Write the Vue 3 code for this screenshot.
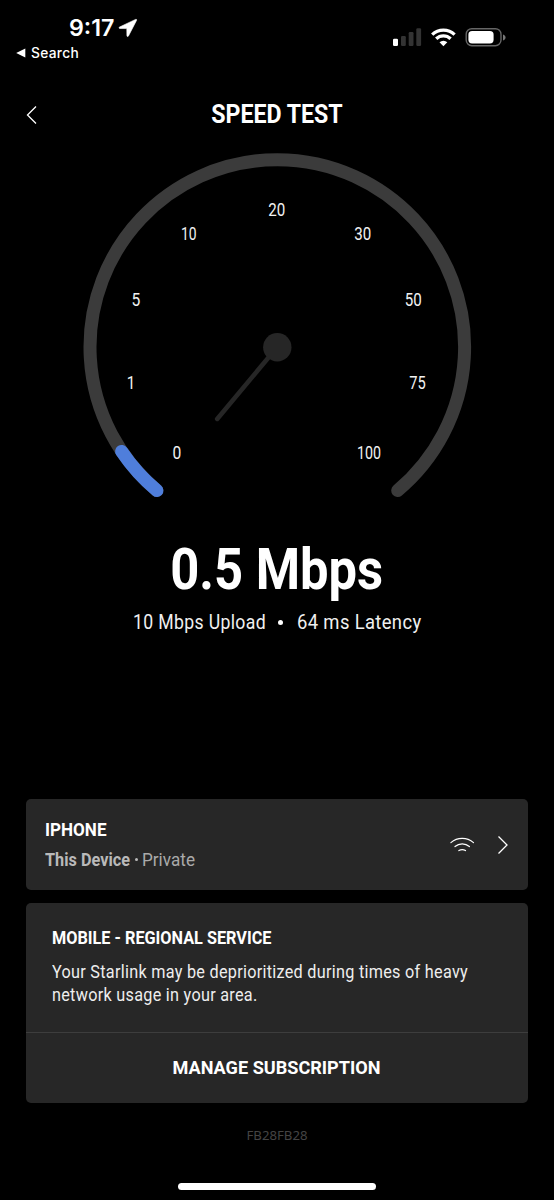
<script setup>
const ticks = [
  { label: '0', x: 177, y: 459, w: 8.8 },
  { label: '1', x: 131, y: 389, w: 8.5 },
  { label: '5', x: 136, y: 306.4, w: 8.8 },
  { label: '10', x: 188.7, y: 240.4, w: 15.6 },
  { label: '20', x: 276.7, y: 215.5, w: 17 },
  { label: '30', x: 362.8, y: 240.4, w: 17 },
  { label: '50', x: 413.2, y: 306.4, w: 17 },
  { label: '75', x: 417.5, y: 389, w: 16.5 },
  { label: '100', x: 368.9, y: 459, w: 24 },
]

// Condenses or widens a single line of text to the given width in pixels.
const vFit = {
  mounted(el, { value }) {
    el.style.transform = `scaleX(${value / el.getBoundingClientRect().width})`
  },
}
</script>

<template>
  <main class="screen">
    <header class="status">
      <div class="status-left">
        <div class="clock">
          <span v-fit="45.5" class="time">9:17</span>
          <svg width="20" height="20" viewBox="0 0 20 20"><path d="M17.6 1.4 1.600 9c-1 .5-.7 1.500.3 1.500l6.900.1.1 7c0 1.100 1.100 1.300 1.600.3L18.600 2.300c.3-.7-.3-1.200-1-.9Z" fill="#fff" stroke="#fff" stroke-width=".6" /></svg>
        </div>
        <div class="back-app">
          <svg width="10" height="10" viewBox="0 0 10 10"><path d="M.2 5 9.300.6v8.800Z" fill="#fff" /></svg>
          <span v-fit="48" class="back-label">Search</span>
        </div>
      </div>
      <svg class="status-icons" width="116" height="24" viewBox="390 26 116 24">
        <rect x="393" y="38.800" width="5" height="7.200" rx="1.200" fill="#fff" />
        <g fill="#333"><rect x="401" y="36" width="4.800" height="10" rx="1.200" /><rect x="408.700" y="32" width="4.800" height="14" rx="1.200" /><rect x="416.300" y="28.300" width="4.800" height="17.700" rx="1.200" /></g>
        <g fill="none" stroke="#fff" stroke-width="3.300">
          <path d="M432.200 34.600a16.200 16.200 0 0 1 22.400 0" />
          <path d="M436.200 38.700a10.400 10.400 0 0 1 14.400 0" />
        </g>
        <path d="M443.400 46.200 439.500 42.300a5.600 5.600 0 0 1 7.800 0Z" fill="#fff" />
        <rect x="466.200" y="28.700" width="34.800" height="17" rx="5.600" fill="none" stroke="#666" stroke-width="1.400" />
        <rect x="468.400" y="31" width="25.200" height="12.500" rx="3.700" fill="#fff" />
        <path d="M503 34.500c3.400 1.200 3.400 4.800 0 6Z" fill="#777" />
      </svg>
    </header>

    <nav class="titlebar">
      <svg class="chevron" width="12" height="20" viewBox="0 0 12 20"><path d="m10 1.500-8.500 8.500 8.500 8.500" fill="none" stroke="#fff" stroke-width="1.300" /></svg>
      <h1 v-fit="131.5">SPEED TEST</h1>
    </nav>

    <svg class="gauge" width="554" height="366" viewBox="0 145 554 366">
      <g fill="none" stroke-width="13" stroke-linecap="round">
        <path d="M156.900 490.500A187.300 187.300 0 1 1 397.700 490.500" stroke="#3b3b3b" />
        <path d="M156.900 490.500A187.300 187.300 0 0 1 121.600 451.400" stroke="#4f7edb" />
      </g>
      <path d="M277.300 347 217.200 418.900" stroke="#262626" stroke-width="4.600" stroke-linecap="round" />
      <circle cx="277.300" cy="347.200" r="14.200" fill="#262626" />
      <text v-for="t in ticks" :key="t.label" class="tick" :x="t.x" :y="t.y" :textLength="t.w" lengthAdjust="spacingAndGlyphs">{{ t.label }}</text>
    </svg>

    <section class="result">
      <strong v-fit="213" class="speed">0.5 Mbps</strong>
      <div class="metrics">
        <span v-fit="133">10 Mbps Upload</span>
        <i class="dot"></i>
        <span v-fit="124.5">64 ms Latency</span>
      </div>
    </section>

    <section class="card device">
      <div class="device-text">
        <h2 v-fit="61.5">IPHONE</h2>
        <div class="device-sub">
          <b v-fit="85">This Device</b>
          <i class="dot small"></i>
          <span v-fit="53">Private</span>
        </div>
      </div>
      <svg width="26" height="18" viewBox="0 0 26 18" class="wifi"><g fill="none" stroke="#fff" stroke-width="1.200" stroke-linecap="round"><path d="M1.900 6.600a17.500 17.500 0 0 1 22.600 0" /><path d="M6 10.500a11 11 0 0 1 14.400 0" /><path d="M9.900 14.600a6.400 6.400 0 0 1 6.600 0" /></g></svg>
      <svg width="12" height="20" viewBox="0 0 12 20"><path d="m1.500 1.500 8.500 8.500-8.500 8.500" fill="none" stroke="#fff" stroke-width="1.300" /></svg>
    </section>

    <section class="card plan">
      <div class="plan-body">
        <h2 v-fit="219.5">MOBILE - REGIONAL SERVICE</h2>
        <p><span v-fit="416">Your Starlink may be deprioritized during times of heavy</span></p>
        <p><span v-fit="205.5">network usage in your area.</span></p>
      </div>
      <div class="manage"><span v-fit="208">MANAGE SUBSCRIPTION</span></div>
    </section>

    <footer class="build">FB28FB28</footer>
    <div class="home"></div>
  </main>
</template>

<style>
body {
  background: #000;
}
</style>

<style scoped>
.screen {
  width: 554px;
  height: 1200px;
  overflow: hidden;
  background: #000;
  color: #fff;
  font-family: Roboto, "Liberation Sans", sans-serif;
  display: flex;
  flex-direction: column;
  white-space: nowrap;
}
h1, h2, p {
  margin: 0;
}
.status {
  display: flex;
  justify-content: space-between;
  height: 95px;
  padding: 14px 48px 0 16px;
  box-sizing: border-box;
  font-family: Inter, "Liberation Sans", sans-serif;
}
.clock {
  display: flex;
  align-items: center;
  height: 27px;
  padding-left: 52.5px;
}
.time {
  width: max-content;
  margin-right: 1px;
  font-size: 22.5px;
  font-weight: 600;
  transform-origin: left;
}
.clock svg {
  margin-left: 4px;
}
.back-app {
  display: flex;
  align-items: center;
  gap: 5px;
  height: 23px;
}
.back-label {
  font-size: 14px;
  font-weight: 500;
  letter-spacing: 0.3px;
  transform-origin: left;
}
.status-icons {
  margin-top: 12px;
}
.titlebar {
  display: grid;
  grid-template-columns: 38px 1fr 38px;
  align-items: center;
  height: 40px;
  margin-bottom: 10px;
}
.chevron {
  justify-self: end;
}
.titlebar h1 {
  justify-self: center;
  font-size: 25px;
  line-height: 40px;
  font-weight: 700;
}
.gauge {
  display: block;
}
.tick {
  fill: #f2f2f2;
  font-size: 18px;
  text-anchor: middle;
}
.result {
  display: flex;
  flex-direction: column;
  align-items: center;
  height: 288px;
  padding-top: 34px;
  box-sizing: border-box;
}
.speed {
  font-size: 56.5px;
  line-height: 50px;
  height: 62px;
}
.metrics {
  display: grid;
  grid-template-columns: 145px 19px 125px;
  align-items: center;
  height: 30px;
  font-size: 20px;
  letter-spacing: 0.4px;
  color: #f0f0f0;
}
.metrics span,
.device-sub b,
.device-sub span {
  justify-self: start;
  transform-origin: left;
}
.dot {
  width: 5px;
  height: 5px;
  border-radius: 50%;
  background: #fff;
}
.card {
  margin: 0 26px;
  border-radius: 5px;
  background: #272727;
}
.card h2 {
  width: max-content;
  font-size: 18.2px;
  line-height: 22px;
  transform-origin: left;
}
.device {
  display: flex;
  align-items: center;
  height: 91px;
  padding: 0 19px;
  box-sizing: border-box;
}
.device-text {
  flex: 1;
}
.device-sub {
  display: grid;
  grid-template-columns: 90px 7px 60px;
  align-items: center;
  height: 22px;
  margin-top: 8px;
  font-size: 17.5px;
  color: #aaa;
}
.device-sub b {
  color: #b9b9b9;
}
.small {
  width: 3px;
  height: 3px;
  background: #b9b9b9;
}
.wifi {
  margin-right: 22px;
}
.plan {
  height: 199.5px;
  margin-top: 13px;
}
.plan-body {
  height: 130px;
  box-sizing: border-box;
  padding: 24px 26px 0;
  border-bottom: 1px solid #3d3d3d;
}
.plan-body h2 {
  margin-bottom: 12px;
}
.plan-body p {
  font-size: 17.5px;
  line-height: 23px;
  letter-spacing: 0.3px;
  color: #eee;
}
.plan-body span {
  display: inline-block;
  transform-origin: left;
}
.manage {
  display: flex;
  justify-content: center;
  align-items: center;
  height: 69px;
  font-size: 18.2px;
  font-weight: 700;
}
.build {
  margin-top: 22.5px;
  text-align: center;
  color: #444;
  font-family: "Noto Sans", "DejaVu Sans", sans-serif;
  font-size: 13.2px;
  line-height: 20px;
}
.home {
  width: 198px;
  height: 6.6px;
  margin: 38px auto 0;
  border-radius: 4px;
  background: #fff;
}
</style>
